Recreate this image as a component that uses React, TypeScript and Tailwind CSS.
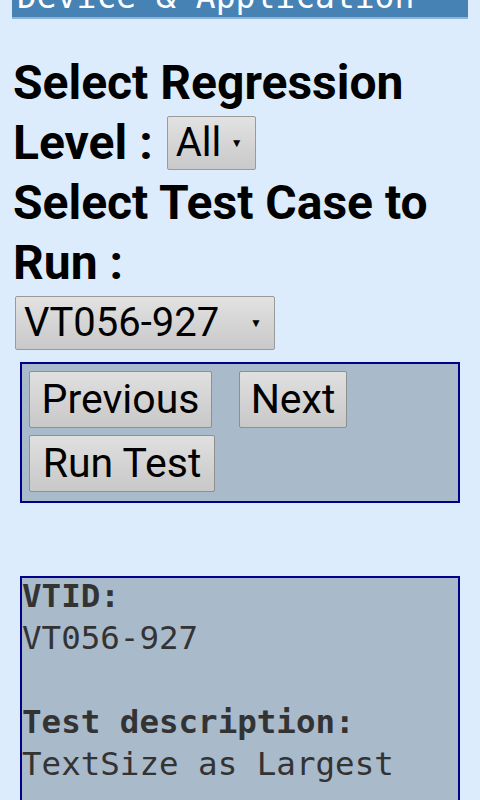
import React from "react";

function SelectBox({ label, width }: { label: string; width: number }) {
  return (
    <span
      className="inline-flex items-center justify-between h-[54px] align-middle rounded-[2px] border border-[#9a9a9a] bg-gradient-to-b from-[#e2e2e2] to-[#c9c9c9] pl-[8px] pr-[12px] text-black text-[40px] leading-none font-normal"
      style={{ width, fontFamily: "Roboto, sans-serif" }}
    >
      <span>{label}</span>
      <span className="text-[12px] leading-none">▼</span>
    </span>
  );
}

function Btn({ children, w }: { children: React.ReactNode; w: string }) {
  return (
    <button
      className={`h-[57px] ${w} rounded-[2px] border border-[#8f8f8f] bg-gradient-to-b from-[#e0e0e0] to-[#c8c8c8] text-black text-[41px] leading-none`}
      style={{ fontFamily: "Roboto, sans-serif" }}
    >
      {children}
    </button>
  );
}

export default function App() {
  return (
    <div className="w-[480px] h-[800px] overflow-hidden bg-[#dcecfc]" style={{ fontFamily: "Roboto, sans-serif" }}>
      <div className="mx-[12px] mt-[-25px] h-[44px] bg-[#4682b4] border-b-2 border-[#8fb3d6] text-white text-[33px] leading-[44px] pl-[5px]"
        style={{ fontFamily: "'DejaVu Sans Mono', monospace" }}>
        Device &amp; Application
      </div>
      <div className="pl-[13px] mt-[34px] text-black font-bold text-[48px] leading-[60px]" style={{ fontFamily: "Roboto, sans-serif" }}>
        <div>Select Regression</div>
        <div className="flex items-center gap-[14px]">
          <span>Level :</span>
          <SelectBox label="All" width={89} />
        </div>
        <div>Select Test Case to</div>
        <div>Run :</div>
      </div>
      <div className="pl-[15px] mt-[3px] font-normal">
        <SelectBox label="VT056-927" width={260} />
      </div>
      <div className="mx-[20px] mt-[12px] h-[141px] border-2 border-[#00008b] bg-[#a9bacb] pl-[7px] pt-[7px] flex flex-col gap-[7px]">
        <div className="flex gap-[27px]">
          <Btn w="w-[183px]">Previous</Btn>
          <Btn w="w-[108px]">Next</Btn>
        </div>
        <div className="flex">
          <Btn w="w-[186px]">Run Test</Btn>
        </div>
      </div>
      <div
        className="mx-[20px] mt-[73px] h-[260px] border-2 border-[#00008b] bg-[#a9bacb] text-[#333333] text-[32.5px] leading-[42px]"
        style={{ fontFamily: "'DejaVu Sans Mono', monospace" }}
      >
        <div className="mt-[-3px]">
          <div className="font-bold">VTID:</div>
          <div>VT056-927</div>
          <div>&nbsp;</div>
          <div className="font-bold">Test description:</div>
          <div>TextSize as Largest</div>
        </div>
      </div>
    </div>
  );
}
